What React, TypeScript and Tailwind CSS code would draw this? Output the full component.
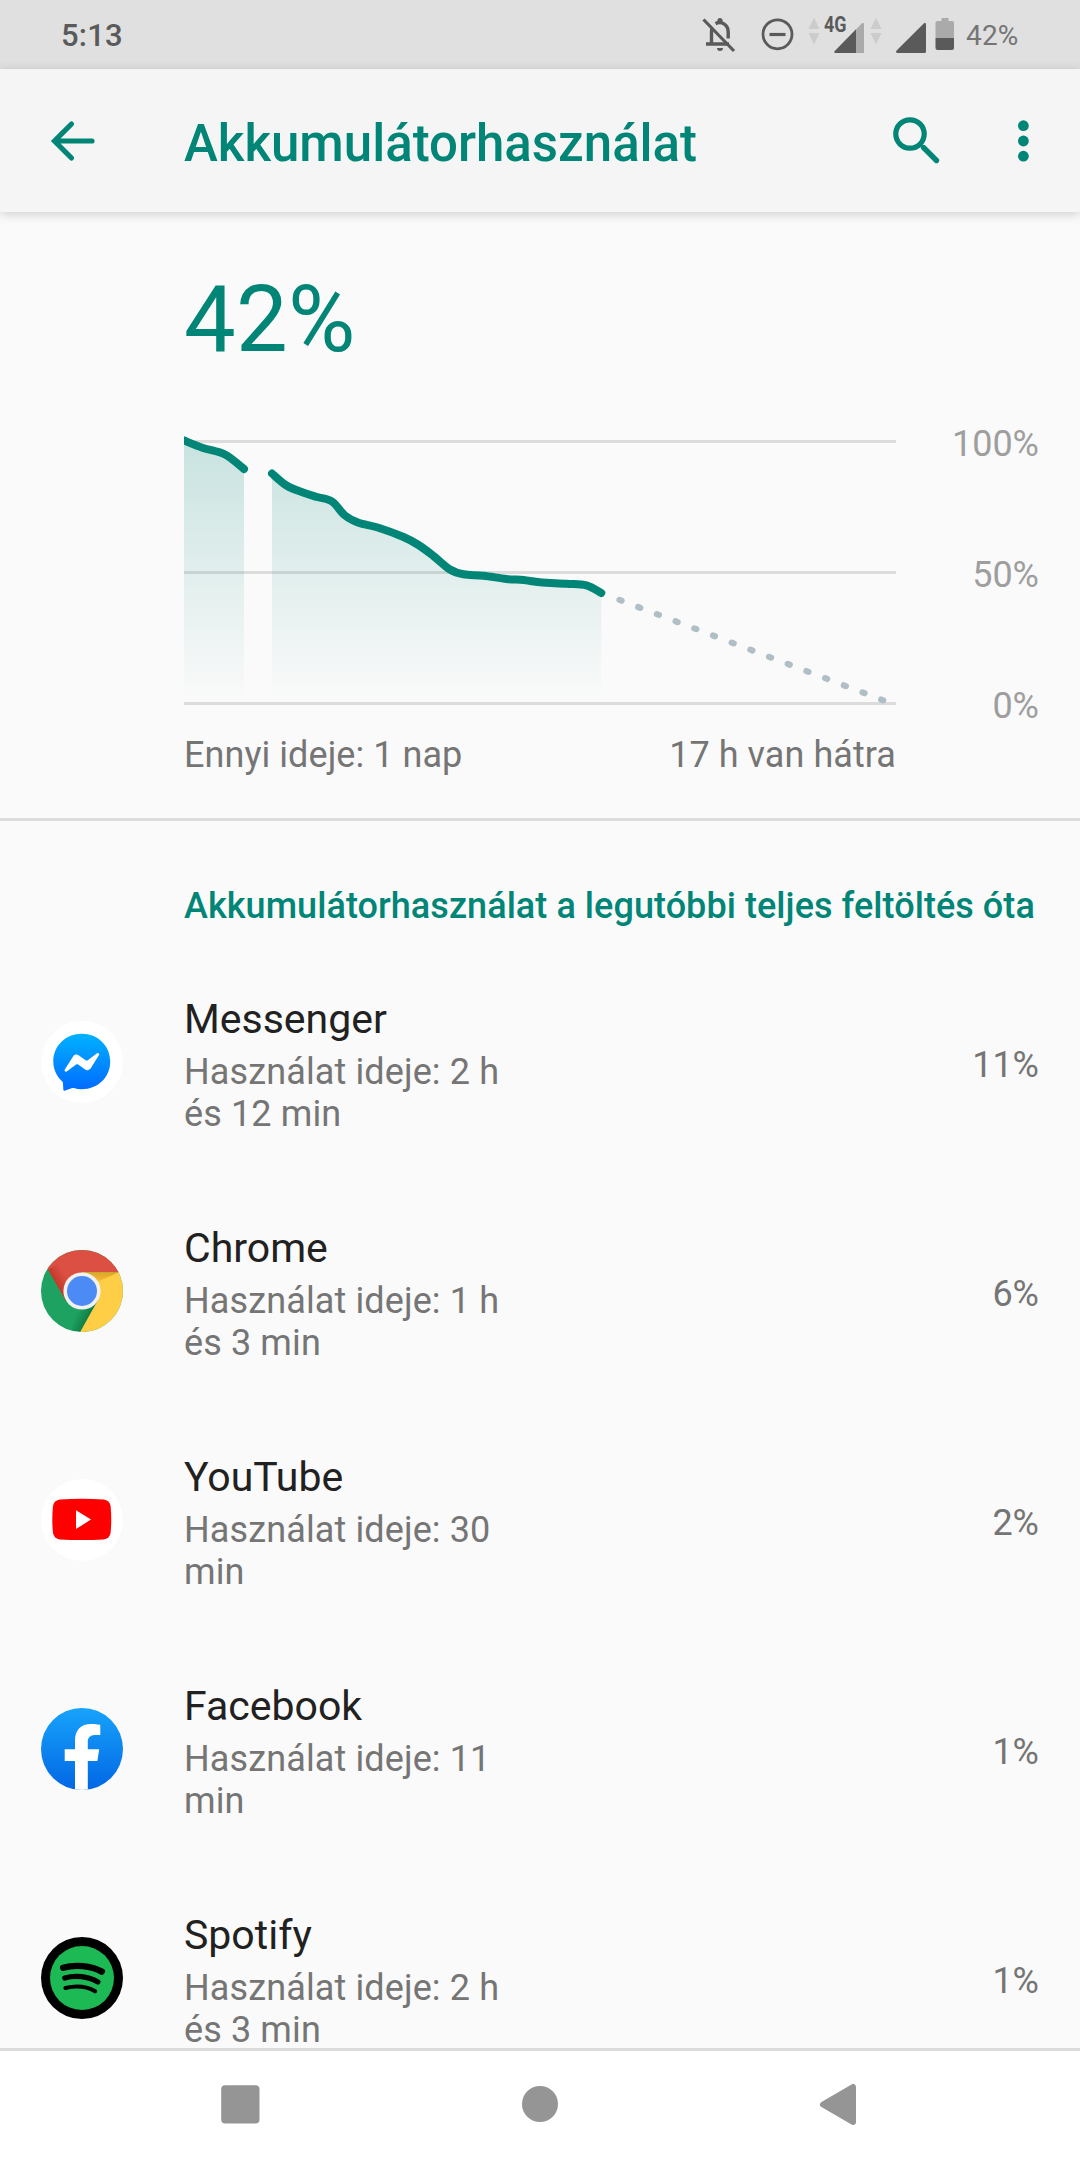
import React from 'react';

type Point = [number, number];

// Battery level samples, in chart pixels (712 wide, 0% at y = 281)
const morning: Point[] = [[-8, 14], [0, 17.5], [19, 25], [41, 31.5], [60, 46]];
const sinceGap: Point[] = [
  [88, 50.5], [102.5, 62.5], [119, 69.5], [133, 74], [148, 78.5], [161, 92.5], [174.5, 99.7],
  [194.5, 104.7], [219.5, 114], [234.5, 122], [249.5, 133], [266, 146.5], [279.5, 151.3], [299.5, 152.7],
  [322.5, 156], [339.5, 157], [356, 159.3], [382.5, 160.7], [402.5, 162.3], [417.3, 170],
];

const smooth = (pts: Point[]) => {
  let d = `M${pts[0][0]} ${pts[0][1]}`;
  for (let i = 0; i < pts.length - 1; i++) {
    const p0 = pts[i - 1] || pts[i];
    const p1 = pts[i];
    const p2 = pts[i + 1];
    const p3 = pts[i + 2] || p2;
    d += ` C${p1[0] + (p2[0] - p0[0]) / 6} ${p1[1] + (p2[1] - p0[1]) / 6} ${p2[0] - (p3[0] - p1[0]) / 6} ${p2[1] - (p3[1] - p1[1]) / 6} ${p2[0]} ${p2[1]}`;
  }
  return d;
};

const area = (pts: Point[]) => `${smooth(pts)} V280 H${pts[0][0]} Z`;

const MessengerIcon = () => (
  <svg width="82" height="82" viewBox="0 0 82 82">
    <defs>
      <linearGradient id="msg" x1="0" y1="0" x2="0" y2="1">
        <stop offset="0" stopColor="#00b2ff" />
        <stop offset="1" stopColor="#006aff" />
      </linearGradient>
    </defs>
    <circle cx="41" cy="41" r="41" fill="#fff" />
    <path d="M40.8 12.7C24.8 12.7 12.3 24.6 12.3 40.6C12.3 48.6 15.8 55.4 21 60.2C21.8 61 22 61.6 22 62.4L22.3 68.4C22.4 69.6 23.2 70 24.2 69.6L30.6 67.2C31.4 66.9 32 66.9 32.8 67.1C35.4 67.9 38 68.3 40.8 68.3C56.8 68.3 69.2 56.6 69.2 40.6C69.2 24.6 56.8 12.7 40.8 12.7Z" fill="url(#msg)" />
    <path d="M23.8 48.6L32.1 35.5C33.4 33.3 36.1 33 38 34.4L44.6 39.2C45.3 39.7 46.1 39.7 46.8 39.2L56 32.3C57.2 31.4 58.8 32.7 58 34L49.9 47.1C48.5 49.3 45.8 49.8 43.8 48.3L37.2 43.5C36.6 43 35.8 43 35.1 43.5L25.7 50.5C24.5 51.4 23 50 23.8 48.6Z" fill="#fff" />
  </svg>
);

const ChromeIcon = () => (
  <svg width="82" height="82" viewBox="0 0 82 82">
    <defs>
      <clipPath id="chromeClip"><circle cx="41" cy="41" r="41" /></clipPath>
      <linearGradient id="redShade" gradientUnits="userSpaceOnUse" x1="14" y1="36" x2="26" y2="29">
        <stop offset="0" stopColor="#a52714" stopOpacity=".6" />
        <stop offset="1" stopColor="#a52714" stopOpacity="0" />
      </linearGradient>
      <linearGradient id="yellowShade" gradientUnits="userSpaceOnUse" x1="0" y1="22" x2="0" y2="36">
        <stop offset="0" stopColor="#b8860b" stopOpacity=".55" />
        <stop offset="1" stopColor="#ea6100" stopOpacity="0" />
      </linearGradient>
      <linearGradient id="greenShade" gradientUnits="userSpaceOnUse" x1="49" y1="66" x2="37" y2="60">
        <stop offset="0" stopColor="#055524" stopOpacity=".5" />
        <stop offset="1" stopColor="#055524" stopOpacity="0" />
      </linearGradient>
    </defs>
    <g clipPath="url(#chromeClip)">
      <path d="M0 0H82V82H0Z" fill="#1da261" />
      <path d="M56 53L39.3 82L30 80L38 55Z" fill="url(#greenShade)" />
      <path d="M7 19.7L25 51L41 41V22.3H82V-2H0V7Z" fill="#dc4f43" />
      <path d="M7 19.7L25 51L41 41L41 22.3L24 10Z" fill="url(#redShade)" />
      <path d="M41 22.3H82V82H39.2L57 50L41 41Z" fill="#ffce47" />
      <path d="M41 22.3H78L54 33Z" fill="url(#yellowShade)" />
      <circle cx="41" cy="41" r="18.6" fill="#f1f1f1" />
      <circle cx="41" cy="41" r="15" fill="#4c8bf5" />
    </g>
  </svg>
);

const YouTubeIcon = () => (
  <svg width="82" height="82" viewBox="0 0 82 82">
    <circle cx="41" cy="41" r="41" fill="#fff" />
    <path d="M19 20.4Q41 19.2 62.6 20.4Q68.6 21.3 69.6 27Q70.9 40.4 69.6 54Q68.6 59.6 62.6 60.4Q41 61.6 19 60.4Q13 59.6 12 54Q10.6 40.4 12 27Q13 21.3 19 20.4Z" fill="#f00" />
    <path d="M35 31.2L50 40.6L35 50Z" fill="#fff" />
  </svg>
);

const FacebookIcon = () => (
  <svg width="82" height="82" viewBox="0 0 82 82">
    <defs>
      <clipPath id="fbClip"><circle cx="41" cy="41" r="41" /></clipPath>
      <linearGradient id="fb" x1="0" y1="0" x2="0" y2="1">
        <stop offset="0" stopColor="#17a3fb" />
        <stop offset="1" stopColor="#0267e4" />
      </linearGradient>
    </defs>
    <circle cx="41" cy="41" r="41" fill="url(#fb)" />
    <path clipPath="url(#fbClip)" d="M34 82V53H23.7V41.3H34V32.5C34 22 40 16 50 16C54.5 16 59.3 16.8 59.3 16.8V27H54C49 27 46.8 30 46.8 33.6V41.3H58.2L56.4 53H46.8V82Z" fill="#fff" />
  </svg>
);

const SpotifyIcon = () => (
  <svg width="82" height="82" viewBox="0 0 82 82" fill="none" stroke="#000" strokeLinecap="round">
    <circle cx="41" cy="41" r="41" fill="#000" stroke="none" />
    <circle cx="41" cy="41" r="32" fill="#1db954" stroke="none" />
    <path d="M22.2 30.8C34 27.2 50 28.8 60.8 34.6" strokeWidth="6.4" />
    <path d="M23.8 41C34 38 47 39.2 56.9 45" strokeWidth="5.2" />
    <path d="M24.4 51C34.5 48.6 45.5 49.2 54.2 54.3" strokeWidth="4" />
  </svg>
);

const apps = [
  { name: 'Messenger', usage: 'Használat ideje: 2 h és 12 min', percent: '11%', Icon: MessengerIcon },
  { name: 'Chrome', usage: 'Használat ideje: 1 h és 3 min', percent: '6%', Icon: ChromeIcon },
  { name: 'YouTube', usage: 'Használat ideje: 30 min', percent: '2%', Icon: YouTubeIcon },
  { name: 'Facebook', usage: 'Használat ideje: 11 min', percent: '1%', Icon: FacebookIcon },
  { name: 'Spotify', usage: 'Használat ideje: 2 h és 3 min', percent: '1%', Icon: SpotifyIcon },
];

const DataArrows = () => (
  <svg width="12" height="69" viewBox="0 0 12 69" fill="#cccccc">
    <path d="M.5 29L6 17.7L11.5 29ZM.5 33L6 44.5L11.5 33Z" />
  </svg>
);

const StatusBar = () => (
  <header className="flex h-[69px] shrink-0 items-center bg-[#e0e0e0] pl-[61px] text-[#5a5a5a]">
    <span className="pt-[2px] text-[31px] font-medium leading-none tracking-[0.2px]">5:13</span>
    <div className="ml-auto flex h-full w-[380px] items-center">
      {/* Notifications off */}
      <svg width="36" height="69" viewBox="0 0 36 69" fill="none" stroke="#5a5a5a">
        <path d="M11.5 45V31.5C11.5 30 11.7 29 12.3 28M15.5 23.6C22 20.6 28.2 25 28.2 32V38.5M6 44H29" strokeWidth="3.4" />
        <path d="M17.4 23V20.6A2.6 2.6 0 0 1 22.6 20.6V23ZM17 48A3 3 0 0 0 23 48Z" fill="#5a5a5a" stroke="none" />
        <path d="M3.5 19.5L34 51" strokeWidth="3.2" />
      </svg>
      {/* Do not disturb */}
      <svg className="ml-[25px]" width="34" height="69" viewBox="0 0 34 69" fill="none" stroke="#5a5a5a">
        <circle cx="16.5" cy="34.3" r="14.5" strokeWidth="2.8" />
        <path d="M8.5 34.5H24.5" strokeWidth="3.2" />
      </svg>
      <div className="ml-[12.5px] flex"><DataArrows /></div>
      <svg className="ml-[4px]" width="42" height="69" viewBox="0 0 42 69">
        <path d="M40 53V24.5Q40 22 38 23.3L31 30.5V53Z" fill="#aaaaaa" />
        <path d="M32 53V29.3L10.5 51.2Q9.5 53 12 53Z" fill="#5a5a5a" />
        <text x="0" y="32" fontSize="21.5" fontWeight="700" textLength="22.5" lengthAdjust="spacingAndGlyphs" fill="#5a5a5a">4G</text>
      </svg>
      <div className="ml-[4px] flex"><DataArrows /></div>
      <svg className="ml-[14px]" width="31" height="69" viewBox="0 0 31 69" fill="#5a5a5a">
        <path d="M30 51.5V24.5Q30 22 28 23.3L.6 50.6Q-.8 53 1.5 53H28.5Q30 53 30 51.5Z" />
      </svg>
      <svg className="ml-[8px]" width="20" height="69" viewBox="0 0 20 69">
        <path d="M6.5 18H13.5V21H17Q19 21 19 23V38H.5V23Q.5 21 2.5 21H6.5Z" fill="#aaaaaa" />
        <path d="M.5 38H19V48Q19 50 17 50H2.5Q.5 50 .5 48Z" fill="#5a5a5a" />
      </svg>
      <span className="ml-[11.5px] pt-[2px] text-[28px] leading-none tracking-[0.2px] text-[#757575]">42%</span>
    </div>
  </header>
);

const Toolbar = () => (
  <div className="relative z-10 flex h-[143px] shrink-0 items-center bg-[#f5f5f5] pl-[48px] shadow-[0_2px_10px_rgba(0,0,0,0.18)]">
    <svg width="50" height="48" viewBox="0 0 50 48" fill="none" stroke="#008577" strokeWidth="5.2" strokeLinecap="round">
      <path d="M8 24H44M23.5 7L6.5 24L23.5 41" />
    </svg>
    <h1 className="ml-[86px] pt-[6px] text-[51px] font-medium leading-[60px] text-[#008577]">Akkumulátorhasználat</h1>
    <svg className="ml-auto" width="56" height="56" viewBox="0 0 56 56" fill="none" stroke="#008577" strokeLinecap="round">
      <circle cx="22" cy="21" r="14.2" strokeWidth="5.2" />
      <path d="M35.5 34.5L48.5 47.5" strokeWidth="5.4" />
    </svg>
    <svg className="ml-[68px] mr-[44px]" width="24" height="56" viewBox="0 0 24 56" fill="#008577">
      <circle cx="11.4" cy="12.7" r="5.4" />
      <circle cx="11.4" cy="28" r="5.4" />
      <circle cx="11.4" cy="43.2" r="5.4" />
    </svg>
  </div>
);

const UsageChart = () => (
  <svg className="overflow-hidden" width="712" height="283" viewBox="0 0 712 283">
    <defs>
      <linearGradient id="fade" gradientUnits="userSpaceOnUse" x1="0" y1="17" x2="0" y2="280">
        <stop offset="0" stopColor="#008577" stopOpacity=".2" />
        <stop offset="1" stopColor="#008577" stopOpacity="0" />
      </linearGradient>
    </defs>
    <path d="M0 18.5H712M0 149.5H712M0 280.5H712" stroke="#dcdcdc" strokeWidth="3" />
    <path d={area(morning)} fill="url(#fade)" />
    <path d={area(sinceGap)} fill="url(#fade)" />
    <path d="M435.5 176.9L701 278" stroke="#b0bec5" strokeWidth="6.2" strokeLinecap="round" strokeDasharray="2.2 17.8" />
    <g fill="none" stroke="#008577" strokeWidth="8" strokeLinecap="round" strokeLinejoin="round">
      <path d={smooth(morning)} />
      <path d={smooth(sinceGap)} />
    </g>
  </svg>
);

const App: React.FC = () => {
  return (
    <div className="flex h-[2160px] w-[1080px] flex-col overflow-hidden bg-[#fafafa] font-[Roboto,sans-serif]">
      <StatusBar />
      <Toolbar />

      <main className="min-h-0 flex-1 overflow-hidden">
        {/* Level and history */}
        <section className="border-b-[3px] border-[#dcdcdc] pb-[42px] pl-[184px] pr-[41px] pt-[54px]">
          <div className="text-[92px] leading-[108px] tracking-[0.3px] text-[#008577]">42%</div>
          <div className="mt-[49px] flex items-start justify-between">
            <UsageChart />
            <div className="flex flex-col gap-[89px] text-right text-[36px] leading-[42px] text-[#9e9e9e]">
              <span>100%</span>
              <span>50%</span>
              <span>0%</span>
            </div>
          </div>
          <div className="mt-[7px] flex w-[712px] justify-between text-[36px] leading-[42px] tracking-[0.06px] text-[#757575]">
            <span>Ennyi ideje: 1 nap</span>
            <span>17 h van hátra</span>
          </div>
        </section>

        {/* Usage per app */}
        <section className="pt-[64px]">
          <h2 className="pl-[184px] text-[36px] font-medium leading-[42px] tracking-[0.06px] text-[#008577] whitespace-nowrap">
            Akkumulátorhasználat a legutóbbi teljes feltöltés óta
          </h2>
          <ul className="mt-[23px]">
            {apps.map(({ name, usage, percent, Icon }) => (
              <li key={name} className="flex h-[229px] items-center pl-[41px] pr-[41px]">
                <div className="-mt-[5px]">
                  <Icon />
                </div>
                <div className="ml-[61px] w-[330px]">
                  <div className="text-[41px] leading-[48px] text-[#212121]">{name}</div>
                  <div className="mt-2 text-[36px] leading-[42px] tracking-[0.12px] text-[#757575]">{usage}</div>
                </div>
                <span className="ml-auto text-[36px] leading-[42px] text-[#757575]">{percent}</span>
              </li>
            ))}
          </ul>
        </section>
      </main>

      {/* System navigation */}
      <nav className="flex h-[112px] shrink-0 items-center justify-center gap-[256px] border-t-[3px] border-[#dcdcdc] bg-white pb-[3px]">
        <svg width="44" height="44" viewBox="0 0 44 44" fill="#959595">
          <rect x="3.2" y="3.3" width="38.3" height="38.3" rx="4" />
        </svg>
        <svg width="44" height="44" viewBox="0 0 44 44" fill="#959595">
          <circle cx="22" cy="22" r="18" />
        </svg>
        <svg width="44" height="44" viewBox="0 0 44 44" fill="#959595" stroke="#959595" strokeWidth="6" strokeLinejoin="round">
          <path d="M5 22.5L35 5V40Z" />
        </svg>
      </nav>
    </div>
  );
};

export default App;
